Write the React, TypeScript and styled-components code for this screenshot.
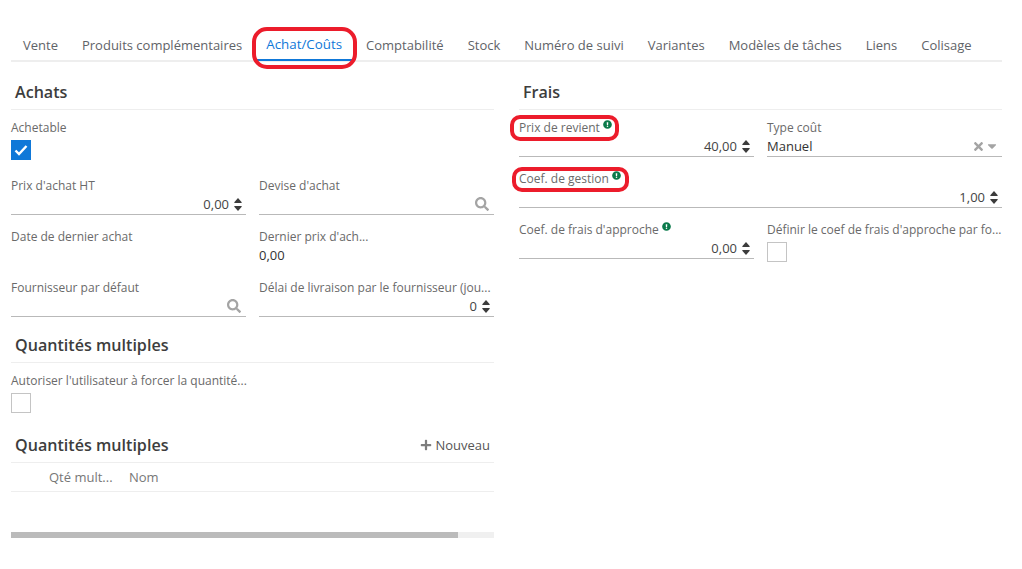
import React from "react";
import styled, { createGlobalStyle } from "styled-components";
import { FaSearch, FaPlus, FaTimes, FaCaretDown, FaExclamationCircle } from "react-icons/fa";

const GlobalStyle = createGlobalStyle`
  html, body { margin: 0; padding: 0; background: #fff; }
  body { font-family: "Open Sans", "Liberation Sans", sans-serif; font-size: 12px; color: #4c4c4c; }
`;

const Page = styled.div`
  width: 1022px;
  height: 569px;
  box-sizing: border-box;
  padding: 28px 20px 0 11px;
  overflow: hidden;
`;

const Tabs = styled.nav`
  display: flex;
  height: 32px;
  border-bottom: 2px solid #eeeeee;
`;

const Tab = styled.div<{ $active?: boolean }>`
  position: relative;
  box-sizing: border-box;
  height: ${p => (p.$active ? "33px" : "32px")};
  padding: ${p => (p.$active ? "7px 12px 0" : "8px 12px 0")};
  font-size: ${p => (p.$active ? "13.35px" : "13px")};
  line-height: 18px;
  white-space: nowrap;
  color: ${p => (p.$active ? "#0f78d8" : "#5f6368")};
  box-shadow: ${p => (p.$active ? "inset 0 -2px 0 #0f78d8" : "none")};
`;

const TabRing = styled.span`
  position: absolute;
  left: -2px;
  right: -3px;
  top: -1px;
  bottom: -8px;
  border: 4px solid #ec1c2b;
  border-radius: 15px;
`;

const Columns = styled.div`
  display: grid;
  grid-template-columns: 483px 483px;
  column-gap: 25px;
  margin-top: 15px;
`;

const Column = styled.section``;

const SectionTitle = styled.div<{ $top?: number }>`
  display: flex;
  justify-content: space-between;
  align-items: center;
  height: 30px;
  margin-top: ${p => p.$top ?? 0}px;
  padding: 0 4px 2px;
  border-bottom: 1px solid #eeeeee;
  font-size: 16.1px;
  font-weight: 550;
  color: #3d3d3d;
`;

const AddButton = styled.span`
  display: flex;
  align-items: center;
  gap: 3px;
  font-size: 13px;
  font-weight: 400;
  color: #555;
  svg { color: #7d7d7d; font-size: 12px; }
`;

const FieldGrid = styled.div`
  display: grid;
  grid-template-columns: 235px 235px;
  column-gap: 13px;
  row-gap: 12px;
  padding-top: 8px;
`;

const Field = styled.div<{ $wide?: boolean }>`
  min-width: 0;
  grid-column: ${p => (p.$wide ? "1 / -1" : "auto")};
`;

const Label = styled.div`
  position: relative;
  width: fit-content;
  max-width: 100%;
  height: 18px;
  line-height: 20px;
  font-size: 12px;
  color: #6a6a6a;
  white-space: nowrap;
`;

const LabelText = styled.span`
  display: inline-block;
  vertical-align: top;
`;

const Help = styled(FaExclamationCircle)`
  position: relative;
  top: -1px;
  margin-left: 3px;
  margin-top: 3px;
  font-size: 9px;
  color: #0b7a4b;
  vertical-align: top;
`;

const LabelRing = styled.span<{ $long?: boolean }>`
  position: absolute;
  left: ${p => (p.$long ? "-7px" : "-9px")};
  right: ${p => (p.$long ? "-8px" : "-7px")};
  top: ${p => (p.$long ? "-2px" : "-3px")};
  bottom: -5px;
  border: 4px solid #ec1c2b;
  border-radius: 10px;
  pointer-events: none;
`;

const Input = styled.div`
  display: flex;
  align-items: center;
  justify-content: flex-end;
  gap: 5px;
  height: 20px;
  padding: 0 4px 0 0;
  border-bottom: 1px solid #b9b9b9;
  font-size: 13px;
  color: #444;
`;

const Value = styled.div`
  height: 21px;
  line-height: 20px;
  font-size: 13px;
  color: #333;
`;

const SelectValue = styled.span`
  flex: 1;
  color: #333;
`;

const MutedIcons = styled.span`
  display: flex;
  align-items: center;
  margin-right: 1px;
  color: #a4a4a4;
  svg { display: block; }
`;

const SelectIcons = styled(MutedIcons)`
  margin-right: -1px;
`;

const SearchIcon = styled(FaSearch)`
  font-size: 14px;
`;

const ClearIcon = styled(FaTimes)`
  font-size: 13px;
`;

const CaretIcon = styled(FaCaretDown)`
  font-size: 14px;
`;

const SpinnerIcon = styled.svg`
  display: block;
  width: 8px;
  height: 13px;
`;

const Spinner = () => (
  <SpinnerIcon viewBox="0 0 8 13">
    <path d="M4 0 L7.7 4.2 Q8 5 7.2 5 L0.8 5 Q0 5 0.3 4.2 Z" fill="#3c3c3c" />
    <path d="M4 13 L7.7 8.8 Q8 8 7.2 8 L0.8 8 Q0 8 0.3 8.8 Z" fill="#3c3c3c" />
  </SpinnerIcon>
);

const Checkbox = styled.div<{ $checked?: boolean; $spaced?: boolean }>`
  display: flex;
  align-items: center;
  justify-content: center;
  width: 20px;
  height: 20px;
  box-sizing: border-box;
  margin-top: 4px;
  margin-bottom: ${p => (p.$spaced ? "4px" : "0")};
  background: ${p => (p.$checked ? "#0f78d8" : "#fff")};
  border: 1px solid ${p => (p.$checked ? "#0f78d8" : "#c4c4c4")};
`;

const CheckMark = () => (
  <svg width="14" height="12" viewBox="0 0 14 12">
    <path d="M1.5 6.5 L5 10 L12.5 2" fill="none" stroke="#fff" strokeWidth="2.4" />
  </svg>
);

const TableHead = styled.div`
  display: flex;
  height: 28px;
  align-items: center;
  border-bottom: 1px solid #eeeeee;
  font-size: 13px;
  color: #777;
`;

const HeadCell = styled.span<{ $w: number; $indent?: number }>`
  width: ${p => p.$w}px;
  padding-left: ${p => p.$indent ?? 0}px;
`;

const ScrollTrack = styled.div`
  height: 6px;
  margin-top: 40px;
  background: #f0f0f0;
`;

const ScrollThumb = styled.div`
  height: 100%;
  background: #bbbbbb;
`;

const TABS = ["Vente", "Produits complémentaires", "Achat/Coûts", "Comptabilité", "Stock", "Numéro de suivi", "Variantes", "Modèles de tâches", "Liens", "Colisage"];

export default function App() {
  return (
    <Page>
      <GlobalStyle />
      <Tabs>
        {TABS.map(name => (
          <Tab key={name} $active={name === "Achat/Coûts"}>
            {name}
            {name === "Achat/Coûts" && <TabRing />}
          </Tab>
        ))}
      </Tabs>
      <Columns>
        <Column>
          <SectionTitle>Achats</SectionTitle>
          <FieldGrid>
            <Field $wide>
              <Label>Achetable</Label>
              <Checkbox $checked $spaced><CheckMark /></Checkbox>
            </Field>
            <Field>
              <Label>Prix d'achat HT</Label>
              <Input>0,00 <Spinner /></Input>
            </Field>
            <Field>
              <Label>Devise d'achat</Label>
              <Input><MutedIcons><SearchIcon /></MutedIcons></Input>
            </Field>
            <Field>
              <Label>Date de dernier achat</Label>
            </Field>
            <Field>
              <Label>Dernier prix d'ach...</Label>
              <Value>0,00</Value>
            </Field>
            <Field>
              <Label>Fournisseur par défaut</Label>
              <Input><MutedIcons><SearchIcon /></MutedIcons></Input>
            </Field>
            <Field>
              <Label>Délai de livraison par le fournisseur (jou...</Label>
              <Input>0 <Spinner /></Input>
            </Field>
          </FieldGrid>
          <SectionTitle $top={13}>Quantités multiples</SectionTitle>
          <FieldGrid>
            <Field $wide>
              <Label>Autoriser l'utilisateur à forcer la quantité...</Label>
              <Checkbox />
            </Field>
          </FieldGrid>
          <SectionTitle $top={17}>
            Quantités multiples
            <AddButton><FaPlus /> Nouveau</AddButton>
          </SectionTitle>
          <TableHead>
            <HeadCell $w={80} $indent={38}>Qté mult...</HeadCell>
            <HeadCell $w={100}>Nom</HeadCell>
          </TableHead>
          <ScrollTrack>
            <ScrollThumb style={{ width: `${(447 / 483) * 100}%` }} />
          </ScrollTrack>
        </Column>
        <Column>
          <SectionTitle>Frais</SectionTitle>
          <FieldGrid>
            <Field>
              <Label>
                <LabelText>Prix de revient</LabelText>
                <Help />
                <LabelRing />
              </Label>
              <Input>40,00 <Spinner /></Input>
            </Field>
            <Field>
              <Label>Type coût</Label>
              <Input>
                <SelectValue>Manuel</SelectValue>
                <SelectIcons><ClearIcon /><CaretIcon /></SelectIcons>
              </Input>
            </Field>
            <Field $wide>
              <Label>
                <LabelText>Coef. de gestion</LabelText>
                <Help />
                <LabelRing $long />
              </Label>
              <Input>1,00 <Spinner /></Input>
            </Field>
            <Field>
              <Label>
                <LabelText>Coef. de frais d'approche</LabelText>
                <Help />
              </Label>
              <Input>0,00 <Spinner /></Input>
            </Field>
            <Field>
              <Label>Définir le coef de frais d'approche par fo...</Label>
              <Checkbox />
            </Field>
          </FieldGrid>
        </Column>
      </Columns>
    </Page>
  );
}
